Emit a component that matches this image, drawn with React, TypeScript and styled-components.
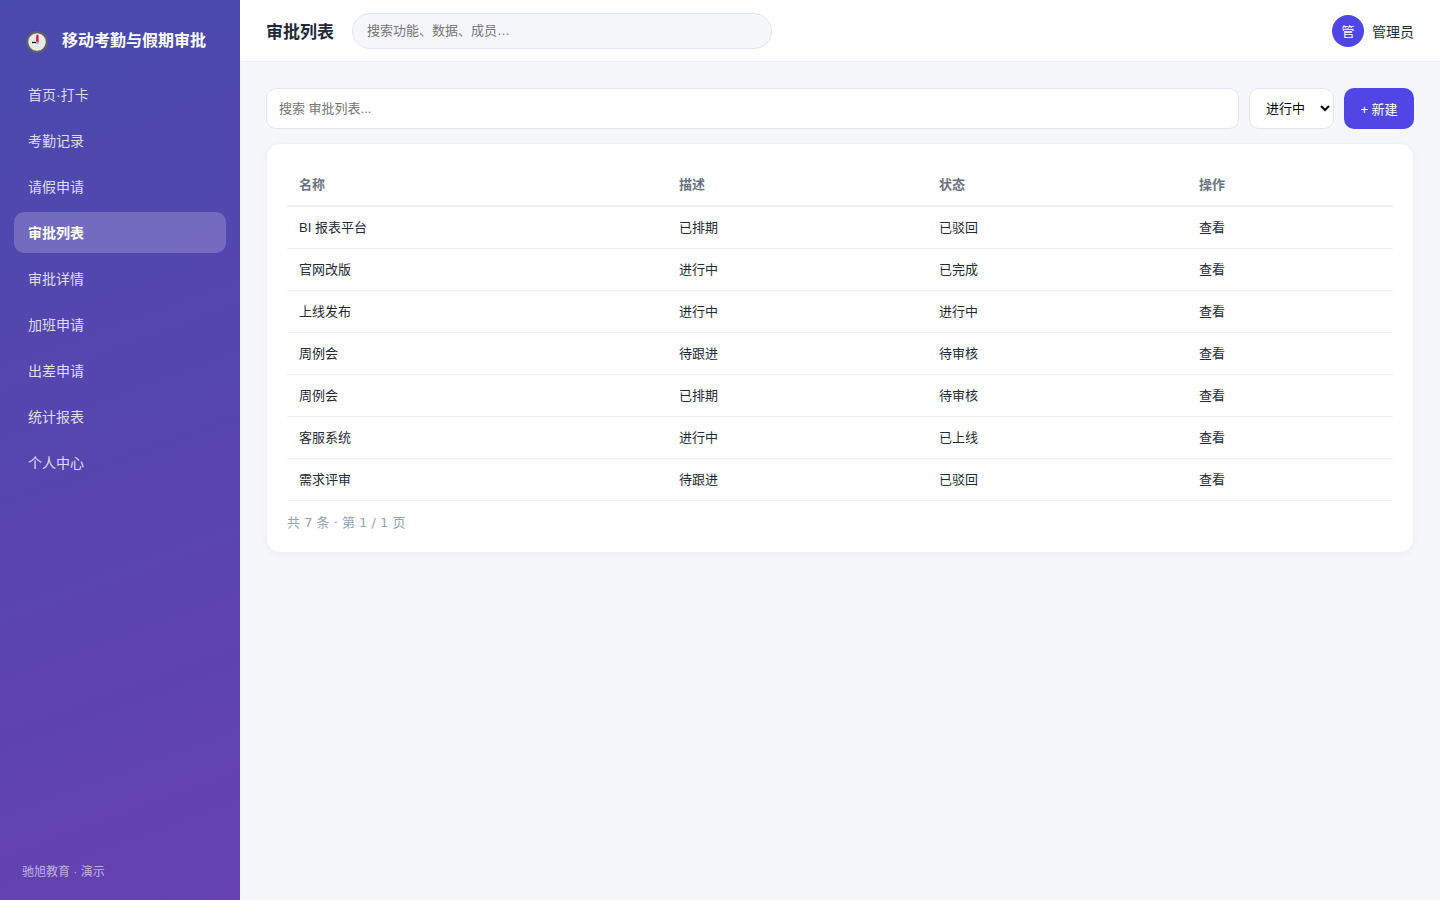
import React, { useState } from "react";
import styled, { createGlobalStyle } from "styled-components";

const cjkFont = `"Noto Sans CJK SC", sans-serif`;

const GlobalStyle = createGlobalStyle`
  * { box-sizing: border-box; }
  body {
    margin: 0;
    background: #f5f7fb;
    color: #1f2937;
    font-family: "Liberation Sans", ${cjkFont};
    font-size: 14px;
    line-height: 20px;
  }
  button, input, select { font-family: inherit; }
`;

const Shell = styled.div`
  display: flex;
  min-height: 100vh;
`;

const Sidebar = styled.aside`
  display: flex;
  flex-direction: column;
  flex: 0 0 240px;
  padding: 22px 14px 18px;
  background: linear-gradient(160deg, #494aad, #6541b1);
  color: #fff;
`;

const Brand = styled.div`
  display: flex;
  align-items: flex-end;
  gap: 14px;
  padding: 7px 12px 21px;
  font-size: 16px;
  font-weight: 700;
  line-height: 24px;
  white-space: nowrap;
`;

const NavList = styled.nav`
  display: flex;
  flex-direction: column;
  gap: 5px;
`;

const NavLink = styled.a<{ $active: boolean }>`
  padding: 11px 14px 9px;
  border-radius: 10px;
  line-height: 21px;
  color: ${(p) => (p.$active ? "#fff" : "rgba(255, 255, 255, 0.82)")};
  background: ${(p) => (p.$active ? "rgba(255, 255, 255, 0.2)" : "transparent")};
  font-weight: ${(p) => (p.$active ? 700 : 400)};
  text-decoration: none;
`;

const SideFooter = styled.div`
  margin-top: auto;
  padding: 0 8px;
  font-size: 12px;
  color: rgba(255, 255, 255, 0.6);
`;

const Main = styled.div`
  display: flex;
  flex-direction: column;
  flex: 1;
  min-width: 0;
`;

const Topbar = styled.header`
  display: flex;
  align-items: center;
  gap: 18px;
  height: 62px;
  padding: 0 26px;
  background: #fff;
  border-bottom: 1px solid #eceef4;
  font-family: ${cjkFont};
`;

const Title = styled.h1`
  margin: 0;
  font-size: 17px;
  font-weight: 700;
  line-height: 24px;
  white-space: nowrap;
`;

const GlobalSearch = styled.input`
  && { font-family: "Liberation Sans", ${cjkFont}; }
  flex: 0 1 420px;
  min-width: 0;
  height: 36px;
  padding: 0 14px;
  border: 1px solid #e3e6ef;
  border-radius: 18px;
  background: #f5f7fb;
  font-size: 13px;
  &::placeholder { color: #757575; }
`;

const User = styled.div`
  display: flex;
  align-items: center;
  gap: 8px;
  margin-left: auto;
  white-space: nowrap;
`;

const Avatar = styled.span`
  display: grid;
  place-items: center;
  width: 32px;
  height: 32px;
  border-radius: 50%;
  background: #4f46e5;
  color: #fff;
  font-size: 13px;
`;

const Content = styled.main`
  display: flex;
  flex-direction: column;
  gap: 14px;
  padding: 26px;
`;

const Toolbar = styled.div`
  display: flex;
  gap: 10px;
  height: 41px;
`;

const FilterInput = styled.input`
  flex: 1;
  min-width: 0;
  padding: 0 12px;
  border: 1px solid #e3e6ef;
  border-radius: 10px;
  background: #fff;
  font-size: 13px;
  &::placeholder { color: #757575; }
`;

const StatusSelect = styled.select`
  width: 85px;
  padding: 0 0 0 12px;
  border: 1px solid #e3e6ef;
  border-radius: 10px;
  background: #fff;
  color: #000;
  font-size: 13px;
`;

const PrimaryButton = styled.button`
  width: 70px;
  padding: 0;
  border: 0;
  border-radius: 10px;
  background: #4f46e5;
  color: #fff;
  font-size: 13px;
  cursor: pointer;
`;

const Card = styled.section`
  padding: 20px;
  border: 1px solid #eff1f6;
  border-radius: 14px;
  background: #fff;
  box-shadow: 0 2px 8px rgba(31, 41, 85, 0.04);
`;

const Table = styled.table`
  width: 100%;
  table-layout: fixed;
  border-collapse: separate;
  border-spacing: 0;
  font-size: 13px;
  text-align: left;
`;

const HeadCell = styled.th<{ $width?: number }>`
  width: ${(p) => (p.$width ? `${p.$width}px` : "auto")};
  height: 43px;
  padding: 0 12px;
  border-bottom: 2px solid #eeeff4;
  color: #6b7280;
  font-weight: 700;
`;

const Cell = styled.td`
  height: 42px;
  padding: 0 12px;
  border-bottom: 1px solid #eeeff2;
`;

const RowLink = styled.a`
  color: inherit;
  text-decoration: none;
`;

const Pager = styled.div`
  padding-top: 12px;
  font-family: "DejaVu Sans", ${cjkFont};
  font-size: 13px;
  line-height: 19px;
  color: #94a3b8;
`;

const ClockIcon = () => (
  <svg width="22" height="22" viewBox="0 0 22 22" aria-hidden="true">
    <circle cx="11" cy="11" r="9.8" fill="#e8e8e8" stroke="#616161" strokeWidth="2.2" />
    <path
      d="M11 2.6v1M11 18.4v1M2.6 11h1M18.4 11h1M6.8 3.8l.4.8M15.2 3.8l-.4.8M6.8 18.2l.4-.8M15.2 18.2l-.4-.8M3.8 6.8l.8.4M18.2 6.8l-.8.4M3.8 15.2l.8-.4M18.2 15.2l-.8-.4"
      stroke="#fff"
      strokeWidth="0.8"
    />
    <path d="M6 11.5h5" stroke="#111" strokeWidth="1.2" />
    <path d="M10.4 11 10.8 4h1.2l.3 7z" fill="#d5113f" stroke="#d5113f" strokeWidth="0.7" />
    <circle cx="11.4" cy="11.5" r="1.4" fill="#9e9e9e" />
  </svg>
);

const navItems = ["首页·打卡", "考勤记录", "请假申请", "审批列表", "审批详情", "加班申请", "出差申请", "统计报表", "个人中心"];

const rows = [
  ["BI 报表平台", "已排期", "已驳回"],
  ["官网改版", "进行中", "已完成"],
  ["上线发布", "进行中", "进行中"],
  ["周例会", "待跟进", "待审核"],
  ["周例会", "已排期", "待审核"],
  ["客服系统", "进行中", "已上线"],
  ["需求评审", "待跟进", "已驳回"],
];

export default function App() {
  const [active, setActive] = useState("审批列表");

  return (
    <>
      <GlobalStyle />
      <Shell>
        <Sidebar>
          <Brand>
            <ClockIcon />
            移动考勤与假期审批
          </Brand>
          <NavList>
            {navItems.map((item) => (
              <NavLink key={item} href="#" $active={item === active} onClick={() => setActive(item)}>
                {item}
              </NavLink>
            ))}
          </NavList>
          <SideFooter>驰旭教育 · 演示</SideFooter>
        </Sidebar>
        <Main>
          <Topbar>
            <Title>审批列表</Title>
            <GlobalSearch type="search" aria-label="搜索" placeholder="搜索功能、数据、成员…" />
            <User>
              <Avatar>管</Avatar>
              管理员
            </User>
          </Topbar>
          <Content>
            <Toolbar>
              <FilterInput type="text" aria-label="搜索 审批列表" placeholder="搜索 审批列表..." />
              <StatusSelect aria-label="状态" defaultValue="进行中">
                <option>进行中</option>
                <option>已完成</option>
                <option>待审核</option>
              </StatusSelect>
              <PrimaryButton type="button">+ 新建</PrimaryButton>
            </Toolbar>
            <Card>
              <Table>
                <thead>
                  <tr>
                    <HeadCell>名称</HeadCell>
                    <HeadCell $width={260}>描述</HeadCell>
                    <HeadCell $width={260}>状态</HeadCell>
                    <HeadCell $width={206}>操作</HeadCell>
                  </tr>
                </thead>
                <tbody>
                  {rows.map(([name, desc, status], i) => (
                    <tr key={i}>
                      <Cell>{name}</Cell>
                      <Cell>{desc}</Cell>
                      <Cell>{status}</Cell>
                      <Cell>
                        <RowLink href="#">查看</RowLink>
                      </Cell>
                    </tr>
                  ))}
                </tbody>
              </Table>
              <Pager>共 7 条 · 第 1 / 1 页</Pager>
            </Card>
          </Content>
        </Main>
      </Shell>
    </>
  );
}
